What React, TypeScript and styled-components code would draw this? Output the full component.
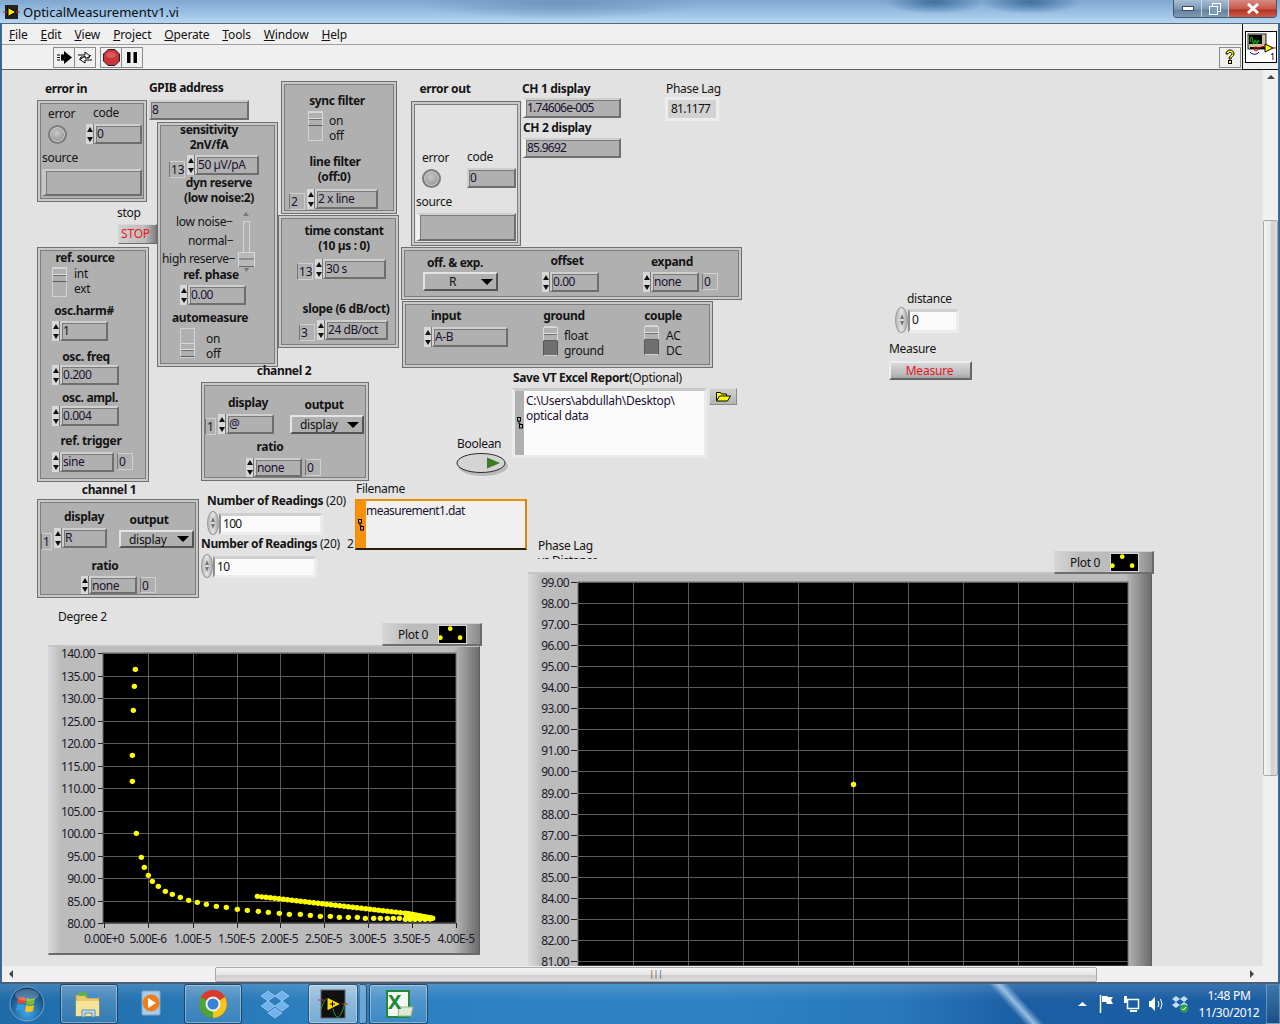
import React from "react";
import styled, { createGlobalStyle, css } from "styled-components";

const Global = createGlobalStyle`
  html, body { margin: 0; padding: 0; background: #1f6aae; overflow: hidden; }
  #root { width: 1280px; height: 1024px; }
  * { box-sizing: border-box; }
`;

const FONT = `"Noto Sans", "Open Sans", Arial, sans-serif`;

type Box = { $x: number; $y: number; $w?: number; $h?: number };
/* Front panel controls sit on a free canvas, as in LabVIEW; props are given in page pixels. */
const at = css<Box>`
  position: absolute;
  left: ${(p) => p.$x - 2}px;
  top: ${(p) => p.$y - 70}px;
  ${(p) => (p.$w !== undefined ? `width: ${p.$w}px;` : "")}
  ${(p) => (p.$h !== undefined ? `height: ${p.$h}px;` : "")}
`;

const Shell = styled.div`
  width: 1280px;
  height: 1024px;
  display: flex;
  flex-direction: column;
  font-family: ${FONT};
  font-size: 12px;
  color: #111;
  overflow: hidden;
`;

const TitleBar = styled.header`
  height: 23px;
  display: flex;
  align-items: center;
  padding-left: 3px;
  gap: 3px;
  position: relative;
  background:
    radial-gradient(ellipse 50px 12px at 935px 2px, #3f6f9f 0%, transparent 100%),
    radial-gradient(ellipse 50px 12px at 1030px 2px, #3f6f9f 0%, transparent 100%),
    radial-gradient(ellipse 140px 16px at 560px 3px, #6f97bd 0%, transparent 100%),
    linear-gradient(to bottom, #7fa7cf, #9cc3e6 60%, #b8d6ee);
`;
const TitleText = styled.span`
  font-size: 13px;
  color: #0c0c0c;
  letter-spacing: 0;
`;
const Caption = styled.div`
  position: absolute;
  right: 3px;
  top: 0;
  display: flex;
  height: 18px;
  border: 1px solid #45566b;
  border-top: none;
  border-radius: 0 0 4px 4px;
  overflow: hidden;
`;
const CaptionBtn = styled.div<{ $w: number; $close?: boolean }>`
  width: ${(p) => p.$w}px;
  display: flex;
  align-items: center;
  justify-content: center;
  border-right: 1px solid #c8d6e4;
  background: ${(p) =>
    p.$close
      ? "linear-gradient(to bottom,#d88a80,#c75a4c 50%,#b53222 60%,#c9604c)"
      : "linear-gradient(to bottom,#a8bed4,#7f9ab6 50%,#64829f 60%,#7d9ab5)"};
  &:last-child { border-right: none; }
`;

const WindowBody = styled.div`
  flex: 0 0 961px;
  display: flex;
  flex-direction: column;
  margin: 0 1px 0 1px;
  border-left: 1px solid #56697c;
  border-right: 1px solid #56697c;
  border-top: 1px solid #56697c;
  border-bottom: 2px solid #4c5f72;
  background: #f0f0f0;
  position: relative;
`;
const MenuBar = styled.nav`
  height: 21px;
  display: flex;
  align-items: center;
  padding-left: 7px;
  gap: 13px;
  border-bottom: 1px solid #a0a0a0;
  font-size: 12px;
  letter-spacing: -0.15px;
`;
const MenuItem = styled.span`
  color: #111;
  u { text-decoration: underline; }
`;
const Toolbar = styled.div`
  height: 25px;
  display: flex;
  align-items: center;
  padding-left: 51px;
  padding-right: 37px;
  border-bottom: 1px solid #5f5f5f;
`;
const ToolGroup = styled.div`
  display: flex;
  margin-right: 5px;
`;
const ToolBtn = styled.div`
  width: 22px;
  height: 21px;
  margin-right: -1px;
  border: 1px solid #8a8a8a;
  display: flex;
  align-items: center;
  justify-content: center;
  background: #f0f0f0;
`;
const HelpBtn = styled(ToolBtn)`
  margin-left: auto;
  margin-right: 0;
`;
const ViIcon = styled.div`
  position: absolute;
  right: 0;
  top: 0;
  width: 36px;
  height: 46px;
  border-left: 1px solid #111;
  border-bottom: 1px solid #111;
  background: #f0f0f0;
  display: flex;
  align-items: center;
  justify-content: center;
`;
const Middle = styled.div`
  flex: 1;
  display: flex;
  min-height: 0;
`;
const Canvas = styled.main`
  position: relative;
  flex: 1;
  background: #e2e2e2;
  overflow: hidden;
`;
const VScroll = styled.div`
  width: 16px;
  background: #f0f0f0;
  border-left: 1px solid #e6e6e6;
  display: flex;
  flex-direction: column;
  align-items: center;
  padding-top: 5px;
`;
const VThumb = styled.div`
  width: 15px;
  height: 556px;
  margin-top: 141px;
  border: 1px solid #a9a9a9;
  border-radius: 2px;
  background: linear-gradient(to right, #f6f6f6, #e6e6e6 50%, #cfcfcf 55%, #dcdcdc);
`;
const ScrollArrow = styled.div<{ $dir: "up" | "left" | "right" }>`
  width: 0;
  height: 0;
  border-style: solid;
  ${(p) =>
    p.$dir === "up"
      ? "border-width:0 4px 4px 4px;border-color:transparent transparent #444 transparent;"
      : p.$dir === "left"
      ? "border-width:4px 4px 4px 0;border-color:transparent #444 transparent transparent;"
      : "border-width:4px 0 4px 4px;border-color:transparent transparent transparent #444;"}
`;
const HScroll = styled.div`
  height: 16px;
  background: #f0f0f0;
  display: flex;
  align-items: center;
  padding-left: 7px;
`;
const HThumb = styled.div`
  width: 882px;
  height: 15px;
  margin-left: 202px;
  border: 1px solid #a9a9a9;
  border-radius: 2px;
  font-size: 8px;
  line-height: 12px;
  text-align: center;
  color: #444;
  background: linear-gradient(to bottom, #f6f6f6, #e6e6e6 50%, #cfcfcf 55%, #dcdcdc);
`;
const HEndArrow = styled.div`
  margin-left: 153px;
`;

/* ---------- front panel parts ---------- */
const Cluster = styled.section<Box>`
  ${at}
  background: #b0b0b0;
  border: 1px solid #6f6f6f;
  box-shadow: inset 0 0 0 2px #c9c9c9, inset 0 0 0 3px #7d7d7d;
`;
const PlainCluster = styled(Cluster)`
  background: #e2e2e2;
`;
const Lbl = styled.span<{ $x?: number; $c?: number; $y: number; $b?: boolean }>`
  position: absolute;
  top: ${(p) => p.$y - 70 - 8}px;
  height: 16px;
  line-height: 16px;
  white-space: nowrap;
  font-size: 12px;
  letter-spacing: ${(p) => (p.$b ? "-0.35px" : "-0.3px")};
  color: #141414;
  font-weight: ${(p) => (p.$b ? 700 : 400)};
  ${(p) => (p.$c !== undefined ? `left:${p.$c - 2}px;transform:translateX(-50%);` : `left:${(p.$x ?? 0) - 2}px;`)}
`;
const Plain = styled.span`
  font-weight: 400;
  letter-spacing: -0.3px;
`;
const NumericRow = styled.div<Box>`
  ${at}
  display: flex;
  align-items: stretch;
`;
const Readout = styled.div`
  flex: 1;
  background: #b0b0b0;
  border: 2px solid;
  border-color: #cfcfcf #6e6e6e #6e6e6e #cfcfcf;
  box-shadow: inset 1px 1px 0 #7a7a7a;
  font-size: 12px;
  letter-spacing: -0.45px;
  line-height: 15px;
  padding-left: 1px;
  white-space: nowrap;
  color: #1a1030;
`;
const PlacedReadout = styled(Readout)<Box>`
  ${at}
`;
const StripReadout = styled(PlacedReadout)`
  border-left: 4px solid #efefef;
  letter-spacing: -0.75px;
`;
const SourceReadout = styled(PlacedReadout)`
  border-left: 4px solid #c6c6c6;
`;
const IndexBox = styled.div<Box>`
  ${at}
  border: 1px solid #d0d0d0;
  border-left: 1px solid #777;
  font-size: 12px;
  line-height: 15px;
  padding-left: 1px;
  color: #1a1030;
`;
const LightReadout = styled.div<Box>`
  ${at}
  background: #d2d2d2;
  border: 3px solid #ececec;
  line-height: 18px;
  padding-left: 3px;
  letter-spacing: -0.75px;
`;
const SpinBox = styled.div`
  flex: 0 0 8px;
  display: flex;
  flex-direction: column;
  justify-content: space-around;
  align-items: center;
  background: #d8d8d8;
  border-right: 1px solid #777;
`;
const TriUp = styled.i`
  width: 0;
  height: 0;
  border-style: solid;
  border-width: 0 3.5px 5px 3.5px;
  border-color: transparent transparent #111 transparent;
`;
const TriDown = styled.i`
  width: 0;
  height: 0;
  border-style: solid;
  border-width: 5px 3.5px 0 3.5px;
  border-color: #111 transparent transparent transparent;
`;
const Ring = styled.div<Box>`
  ${at}
  background: #b0b0b0;
  border: 2px solid;
  border-color: #e4e4e4 #555 #555 #e4e4e4;
  display: flex;
  align-items: center;
  justify-content: space-between;
  padding: 0 3px 0 8px;
  letter-spacing: -0.3px;
`;
const RingArrow = styled.i`
  width: 0;
  height: 0;
  border-style: solid;
  border-width: 6px 6.5px 0 6.5px;
  border-color: #000 transparent transparent transparent;
`;
const RingValue = styled.span`
  margin-left: 16px;
`;
const SwitchTrack = styled.div<Box & { $dark?: boolean; $low?: boolean }>`
  ${at}
  background: ${(p) => (p.$dark ? "linear-gradient(to bottom,#b0b0b0 45%,#6f6f6f 45%)" : "#b0b0b0")};
  border: 1px solid #d2d2d2;
  border-left-color: ${(p) => (p.$dark ? "#555" : "#d2d2d2")};
  border-right-color: ${(p) => (p.$dark ? "#555" : "#d2d2d2")};
  display: flex;
  flex-direction: column;
  justify-content: ${(p) => (p.$low ? "flex-end" : "flex-start")};
`;
const SwitchThumb = styled.div`
  height: 14px;
  background: linear-gradient(to bottom, #b0b0b0 42%, #dedede 42%, #dedede 50%, #707070 50%, #707070 58%, #b0b0b0 58%);
  border: 1px solid #d8d8d8;
  border-bottom: 1px solid #5c5c5c;
  margin: 0 -1px;
`;
const Led = styled.div<Box>`
  ${at}
  border-radius: 50%;
  border: 2px solid #7c7c7c;
  box-shadow: inset 0 0 0 1px #cfcfcf;
  background: radial-gradient(circle at 45% 40%, #c8c8c8 0%, #a0a0a0 60%, #888 100%);
`;
const StopBtn = styled.div<Box>`
  ${at}
  background: linear-gradient(to right, #cfcfcf, #bdbdbd 70%, #7f7f7f);
  border: 1px solid #6c6c6c;
  border-top-color: #d8d8d8;
  border-left-color: #d8d8d8;
  color: #f0141e;
  line-height: 18px;
  text-align: center;
  font-size: 12px;
  letter-spacing: -0.2px;
  padding-right: 4px;
`;
const MeasureBtn = styled(StopBtn)`
  background: linear-gradient(to bottom, #d8d8d8, #bcbcbc 70%, #a4a4a4);
  border: 2px solid;
  border-color: #ededed #666 #666 #ededed;
  line-height: 15px;
  color: #e31422;
  padding-right: 2px;
`;
const WhiteRow = styled.div<Box>`
  ${at}
  display: flex;
  align-items: center;
`;
const WhiteReadout = styled.div<{ $inH: number }>`
  flex: 1;
  height: ${(p) => p.$inH}px;
  margin-top: 1px;
  background: #fafafa;
  border: 3px solid #ececec;
  border-left: 2px solid #8d8d8d;
  border-top: 3px solid #d0d0d0;
  padding-left: 2px;
  line-height: 16px;
  letter-spacing: -0.7px;
`;
const OvalSpin = styled.div<{ $ow: number }>`
  flex: 0 0 ${(p) => p.$ow}px;
  height: 100%;
  border-radius: 50%;
  border: 1px solid #9a9a9a;
  background: linear-gradient(to right, #b7b7b7, #e4e4e4 50%, #a8a8a8);
  display: flex;
  flex-direction: column;
  align-items: center;
  justify-content: center;
  gap: 2px;
`;
const HollowUp = styled.i`
  width: 0;
  height: 0;
  border-style: solid;
  border-width: 0 2.5px 5px 2.5px;
  border-color: transparent transparent #777 transparent;
`;
const HollowDown = styled.i`
  width: 0;
  height: 0;
  border-style: solid;
  border-width: 5px 2.5px 0 2.5px;
  border-color: #777 transparent transparent transparent;
`;
const PathBox = styled.div<Box & { $orange?: boolean }>`
  ${at}
  display: flex;
  background: ${(p) => (p.$orange ? "#f0f0f0" : "#fbfbfb")};
  border: ${(p) => (p.$orange ? "1px solid #e08a10" : "3px solid #ebebeb")};
  border-top: ${(p) => (p.$orange ? "2px solid #ee8c00" : "3px solid #c8c8c8")};
  border-bottom: ${(p) => (p.$orange ? "2px solid #2e1e06" : "3px solid #ebebeb")};
  ${(p) => (p.$orange ? "border-right: 2px solid #d98208;" : "")}
`;
const PathStrip = styled.div<{ $orange?: boolean }>`
  flex: 0 0 ${(p) => (p.$orange ? 10 : 9)}px;
  background: ${(p) => (p.$orange ? "#f7930a" : "#b0b0b0")};
  display: flex;
  align-items: center;
  justify-content: center;
`;
const PathText = styled.div<{ $tight?: boolean }>`
  padding: 2px 0 0 ${(p) => (p.$tight ? 0 : 2)}px;
  line-height: 15px;
  letter-spacing: ${(p) => (p.$tight ? "-0.55px" : "-0.3px")};
  color: #1a1030;
`;
const BrowseBtn = styled.div<Box>`
  ${at}
  background: linear-gradient(to bottom, #d0d0d0, #b4b4b4);
  border: 1px solid #8b8b8b;
  border-top-color: #dedede;
  border-left-color: #dedede;
  display: flex;
  align-items: center;
  justify-content: center;
`;
const ClipLabel = styled.div<Box>`
  ${at}
  overflow: hidden;
  line-height: 15px;
  font-size: 12px;
  letter-spacing: -0.3px;
  white-space: nowrap;
`;
const ChartFrame = styled.div<Box>`
  ${at}
  background: linear-gradient(to right, #d8d8d8 0, #bcbcbc 12px, #bcbcbc calc(100% - 26px), #6f6f6f calc(100% - 1px));
  border-top: 2px solid #c4c4c4;
  border-left: 1px solid #d8d8d8;
  border-bottom: 2px solid #6a6a6a;
  border-right: 1px solid #5f5f5f;
`;
const Legend = styled.div<Box>`
  ${at}
  background: linear-gradient(to right, #d6d6d6, #bcbcbc 25px, #bcbcbc 78%, #8a8a8a);
  border-top: 1px solid #d0d0d0;
  border-left: 1px solid #d8d8d8;
  border-right: 2px solid #6a6a6a;
  border-bottom: 2px solid #6f6f6f;
  display: flex;
  align-items: center;
  padding-left: 15px;
  gap: 10px;
  letter-spacing: -0.3px;
`;
const LegendSwatch = styled.svg`
  width: 29px;
  height: 19px;
  background: #000;
  border: 1px solid #d8d8d8;
  display: block;
`;
const PlotSvg = styled.svg<Box>`
  ${at}
  font-family: ${FONT};
  font-size: 12px;
  letter-spacing: -0.6px;
`;

/* ---------- taskbar ---------- */
const Taskbar = styled.footer`
  flex: 0 0 40px;
  position: relative;
  display: flex;
  align-items: stretch;
  overflow: hidden;
  background:
    linear-gradient(to bottom, rgba(255,255,255,0.14), rgba(255,255,255,0) 40%),
    linear-gradient(to right, #1f6ba8 0, #2d7fbf 25%, #2f83c5 55%, #2878ba 70%, #1b5ea3 80%, #1a5da2 100%);
  &::after {
    content: "";
    position: absolute;
    left: 1010px;
    top: -6px;
    width: 20px;
    height: 60px;
    background: linear-gradient(to right, rgba(190,220,245,0), rgba(190,220,245,0.75) 50%, rgba(190,220,245,0));
    transform: skewX(42deg);
  }
`;
const Orb = styled.div`
  flex: 0 0 60px;
  display: flex;
  align-items: center;
  justify-content: center;
  padding-right: 6px;
`;
const TaskItem = styled.div<{ $w: number; $framed?: boolean; $active?: boolean; $gap?: number }>`
  flex: 0 0 ${(p) => p.$w}px;
  margin-right: ${(p) => p.$gap ?? 4}px;
  display: flex;
  align-items: center;
  justify-content: center;
  ${(p) =>
    p.$framed
      ? `border:1px solid rgba(10,40,70,.7);border-radius:3px;box-shadow:inset 0 0 0 1px rgba(255,255,255,.35);
         background:linear-gradient(to bottom,rgba(255,255,255,${p.$active ? 0.55 : 0.22}),rgba(255,255,255,${p.$active ? 0.35 : 0.08}));`
      : ""}
`;
const StackEdge = styled.div`
  flex: 0 0 7px;
  margin-left: 2px;
  margin-right: 2px;
  border: 1px solid rgba(10,40,70,.7);
  border-left: none;
  border-radius: 0 3px 3px 0;
  background: rgba(255,255,255,.3);
`;
const Tray = styled.div`
  margin-left: auto;
  display: flex;
  align-items: center;
  position: relative;
  z-index: 1;
`;
const TrayIcons = styled.div`
  display: flex;
  align-items: center;
  gap: 8px;
  margin-right: 3px;
  & > svg:first-child { margin-right: 4px; }
`;
const Clock = styled.div`
  width: 74px;
  text-align: center;
  color: #fff;
  font-size: 12px;
  line-height: 17px;
  letter-spacing: -0.3px;
`;
const ShowDesktop = styled.div`
  width: 14px;
  height: 40px;
  border: 1px solid rgba(255,255,255,.3);
  background: linear-gradient(to bottom, #3b78ab, #1a4f86);
`;

/* ---------- compound controls ---------- */
const Numeric = ({ x, y, w, h = 20, v }: { x: number; y: number; w: number; h?: number; v: string }) => (
  <NumericRow $x={x} $y={y} $w={w} $h={h}>
    <SpinBox>
      <TriUp />
      <TriDown />
    </SpinBox>
    <Readout>{v}</Readout>
  </NumericRow>
);
const Idx = ({ x, y, w = 16, h = 17, v }: { x: number; y: number; w?: number; h?: number; v: string }) => (
  <IndexBox $x={x} $y={y} $w={w} $h={h}>{v}</IndexBox>
);
const Switch = ({ x, y, w = 15, low, dark }: { x: number; y: number; w?: number; low?: boolean; dark?: boolean }) => (
  <SwitchTrack $x={x} $y={y} $w={w} $h={30} $low={low} $dark={dark}>
    <SwitchThumb />
  </SwitchTrack>
);
const OvalNumeric = ({ x, y, w, h, ow, v }: { x: number; y: number; w: number; h: number; ow: number; v: string }) => (
  <WhiteRow $x={x} $y={y} $w={w} $h={h}>
    <OvalSpin $ow={ow}>
      <HollowUp />
      <HollowDown />
    </OvalSpin>
    <WhiteReadout $inH={h - 2}>{v}</WhiteReadout>
  </WhiteRow>
);
const LinkGlyph = () => (
  <svg width="6" height="12" viewBox="0 0 6 12">
    <rect x="0.5" y="0.5" width="3" height="3.5" fill="none" stroke="#000" />
    <rect x="2.5" y="7.5" width="3" height="3.5" fill="none" stroke="#000" />
    <path d="M2 4v3h2" fill="none" stroke="#000" />
  </svg>
);
const LegendIcon = () => (
  <LegendSwatch viewBox="0 0 29 19">
    <circle cx="12" cy="3" r="2.6" fill="#ff0" />
    <circle cx="1" cy="13" r="2.6" fill="#ff0" />
    <circle cx="23" cy="13" r="2.6" fill="#ff0" />
  </LegendSwatch>
);

/* ---------- charts ---------- */
const DOTS1: [number, number][] = [
  [286,148],[283,199],[280,271],[277,406],[277,484],[289,640],[304,712],[313,742],[325,766],[337,784],[355,799],[376,814],[397,823],[421,832],[446,841],[472,847],[499,853],[529,859],[559,862],[592,868],[622,871],[655,874],[685,877],[718,880],[748,883],[781,883],[811,886],[841,889],[871,889],[898,892],[925,892],[952,892],[976,895],[1001,895],[1021,895],[1042,895],[1060,895],[1078,895],[1096,898],[1110,898],[1125,898],[1140,898],[1155,898],[1170,897],
];
const upperDots = (): [number, number][] => {
  const out: [number, number][] = [];
  for (let x = 652; x <= 1100; x += 13) out.push([x, 829 + ((x - 652) * 51) / 448]);
  for (let x = 1100; x <= 1180; x += 6) out.push([x, 880 + ((x - 1100) * 15) / 80]);
  for (let x = 1100; x <= 1172; x += 7) out.push([x, 890 + ((x - 1100) * 5) / 80]);
  return out;
};

const Chart1 = () => {
  const L = 103, T = 653, R = 456, B = 923;
  const ys = ["140.00","135.00","130.00","125.00","120.00","115.00","110.00","105.00","100.00","95.00","90.00","85.00","80.00"];
  const xs = ["0.00E+0","5.00E-6","1.00E-5","1.50E-5","2.00E-5","2.50E-5","3.00E-5","3.50E-5","4.00E-5"];
  const gx = [104, 148, 192.5, 236.5, 279.5, 323.5, 367.5, 411.5, 456];
  const yAt = (i: number) => Math.round(T + (i * (B - T)) / 12) + 0.5;
  const all = [...DOTS1, ...upperDots()];
  return (
    <PlotSvg $x={48} $y={645} $w={432} $h={310} viewBox="48 645 432 310">
      <rect x={L} y={T} width={R - L} height={B - T} fill="#000" stroke="#6a6a6a" />
      {ys.map((t, i) => (
        <g key={t}>
          <line x1={L} x2={R} y1={yAt(i)} y2={yAt(i)} stroke="#5c5c5c" />
          <line x1={98} x2={103} y1={yAt(i)} y2={yAt(i)} stroke="#222" />
          <text x={95} y={yAt(i) + 4.5} textAnchor="end" fill="#1a1a2a">{t}</text>
        </g>
      ))}
      {xs.map((t, i) => (
        <g key={t}>
          {i > 0 && i < 8 && <line x1={Math.round(gx[i]) + 0.5} x2={Math.round(gx[i]) + 0.5} y1={T} y2={B} stroke="#5c5c5c" />}
          <line x1={Math.round(gx[i]) + 0.5} x2={Math.round(gx[i]) + 0.5} y1={B} y2={B + 5} stroke="#222" />
          <text x={gx[i]} y={943} textAnchor="middle" fill="#1a1a2a">{t}</text>
        </g>
      ))}
      {all.map(([x, y], i) => (
        <circle key={i} cx={x / 3 + 40} cy={y / 3 + 620} r={2.7} fill="#ff0" />
      ))}
    </PlotSvg>
  );
};

const Chart2 = () => {
  const L = 578, T = 582, R = 1128, B = 966;
  const labels = Array.from({ length: 19 }, (_, i) => `${99 - i}.00`);
  const yAt = (i: number) => Math.round(T + i * 21.05) + 0.5;
  const gx = [633, 688, 743, 798, 853, 908, 963, 1018, 1073];
  return (
    <PlotSvg $x={528} $y={572} $w={624} $h={394} viewBox="528 572 624 394">
      <rect x={L} y={T} width={R - L} height={B - T} fill="#000" stroke="#6a6a6a" />
      {labels.map((t, i) => (
        <g key={t}>
          <line x1={L} x2={R} y1={yAt(i)} y2={yAt(i)} stroke="#5c5c5c" />
          <line x1={571} x2={577} y1={yAt(i)} y2={yAt(i)} stroke="#222" />
          <text x={569} y={yAt(i) + 4} textAnchor="end" fill="#1a1a2a">{t}</text>
        </g>
      ))}
      {gx.map((x) => (
        <line key={x} x1={x + 0.5} x2={x + 0.5} y1={T} y2={B} stroke="#5c5c5c" />
      ))}
      <circle cx={853.5} cy={784.5} r={2.7} fill="#ff0" />
    </PlotSvg>
  );
};

const FrontPanel = () => (
  <Canvas>
    {/* error in */}
    <Lbl $x={45} $y={89} $b>error in</Lbl>
    <Cluster $x={37} $y={100} $w={110} $h={102} />
    <Lbl $x={48} $y={114}>error</Lbl>
    <Lbl $x={93} $y={113}>code</Lbl>
    <Led $x={48} $y={125} $w={19} $h={19} />
    <Numeric x={86} y={124} w={56} v="0" />
    <Lbl $x={42} $y={158}>source</Lbl>
    <SourceReadout $x={42} $y={169} $w={100} $h={27} />

    {/* GPIB */}
    <Lbl $x={149} $y={88} $b>GPIB address</Lbl>
    <PlacedReadout $x={149} $y={100} $w={100} $h={20}>8</PlacedReadout>

    {/* sync / line filter */}
    <Cluster $x={281} $y={81} $w={116} $h={133} />
    <Lbl $c={337} $y={101} $b>sync filter</Lbl>
    <Switch x={308} y={111} />
    <Lbl $x={329} $y={121}>on</Lbl>
    <Lbl $x={329} $y={136}>off</Lbl>
    <Lbl $c={335} $y={162} $b>line filter</Lbl>
    <Lbl $c={334} $y={177} $b>(off:0)</Lbl>
    <Idx x={289} y={193} v="2" />
    <Numeric x={307} y={189} w={71} v="2 x line" />

    {/* sensitivity */}
    <Cluster $x={157} $y={122} $w={121} $h={245} />
    <Lbl $c={209} $y={130} $b>sensitivity</Lbl>
    <Lbl $c={209} $y={145} $b>2nV/fA</Lbl>
    <Idx x={169} y={161} v="13" />
    <Numeric x={187} y={155} w={72} v="50 µV/pA" />
    <Lbl $c={219} $y={183} $b>dyn reserve</Lbl>
    <Lbl $c={219} $y={198} $b>(low noise:2)</Lbl>
    <Lbl $x={176} $y={222}>low noise−</Lbl>
    <Lbl $x={188} $y={241}>normal−</Lbl>
    <Lbl $x={162} $y={259}>high reserve−</Lbl>
    <PlotSvg $x={236} $y={208} $w={22} $h={66} viewBox="236 208 22 66">
      <path d="M243 216l3-4 3 4z" fill="#777" />
      <rect x="243.5" y="221.5" width="6" height="32" fill="#b0b0b0" stroke="#d4d4d4" />
      <rect x="238.5" y="252.5" width="16" height="14" fill="#b8b8b8" stroke="#d8d8d8" />
      <line x1="239" x2="254" y1="259" y2="259" stroke="#6a6a6a" />
      <line x1="239" x2="254" y1="266.5" y2="266.5" stroke="#6a6a6a" />
      <path d="M244 268l2.5 4 2.5-4z" fill="#777" />
    </PlotSvg>
    <Lbl $c={211} $y={275} $b>ref. phase</Lbl>
    <Numeric x={180} y={285} w={66} v="0.00" />
    <Lbl $c={210} $y={318} $b>automeasure</Lbl>
    <Switch x={180} y={328} low />
    <Lbl $x={206} $y={339}>on</Lbl>
    <Lbl $x={206} $y={354}>off</Lbl>

    {/* time constant */}
    <Cluster $x={278} $y={215} $w={121} $h={133} />
    <Lbl $c={344} $y={231} $b>time constant</Lbl>
    <Lbl $c={344} $y={246} $b>(10 µs : 0)</Lbl>
    <Idx x={297} y={263} v="13" />
    <Numeric x={315} y={259} w={71} v="30 s" />
    <Lbl $c={346} $y={309} $b>slope (6 dB/oct)</Lbl>
    <Idx x={299} y={324} v="3" />
    <Numeric x={317} y={320} w={71} v="24 dB/oct" />

    {/* stop */}
    <Lbl $x={117} $y={213}>stop</Lbl>
    <StopBtn $x={118} $y={224} $w={39} $h={20}>STOP</StopBtn>

    {/* ref source */}
    <Cluster $x={37} $y={247} $w={112} $h={235} />
    <Lbl $c={85} $y={258} $b>ref. source</Lbl>
    <Switch x={52} y={267} />
    <Lbl $x={74} $y={274}>int</Lbl>
    <Lbl $x={74} $y={289}>ext</Lbl>
    <Lbl $c={84} $y={311} $b>osc.harm#</Lbl>
    <Numeric x={52} y={321} w={56} v="1" />
    <Lbl $c={86} $y={357} $b>osc. freq</Lbl>
    <Numeric x={52} y={365} w={67} v="0.200" />
    <Lbl $c={90} $y={398} $b>osc. ampl.</Lbl>
    <Numeric x={52} y={406} w={67} v="0.004" />
    <Lbl $c={91} $y={441} $b>ref. trigger</Lbl>
    <Numeric x={52} y={452} w={62} v="sine" />
    <Idx x={117} y={453} v="0" />

    {/* channel 2 */}
    <Lbl $c={284} $y={371} $b>channel 2</Lbl>
    <Cluster $x={201} $y={382} $w={168} $h={99} />
    <Lbl $c={248} $y={403} $b>display</Lbl>
    <Lbl $c={324} $y={405} $b>output</Lbl>
    <Idx x={205} y={418} w={11} v="1" />
    <Numeric x={218} y={414} w={56} v="@" />
    <Ring $x={290} $y={415} $w={74} $h={19}>display<RingArrow /></Ring>
    <Lbl $c={270} $y={447} $b>ratio</Lbl>
    <Numeric x={246} y={458} w={56} h={19} v="none" />
    <Idx x={305} y={459} v="0" />

    {/* channel 1 */}
    <Lbl $c={109} $y={490} $b>channel 1</Lbl>
    <Cluster $x={37} $y={499} $w={162} $h={99} />
    <Lbl $c={84} $y={517} $b>display</Lbl>
    <Lbl $c={149} $y={520} $b>output</Lbl>
    <Idx x={41} y={533} w={11} v="1" />
    <Numeric x={54} y={528} w={53} v="R" />
    <Ring $x={119} $y={530} $w={75} $h={18}>display<RingArrow /></Ring>
    <Lbl $c={105} $y={566} $b>ratio</Lbl>
    <Numeric x={81} y={576} w={56} h={18} v="none" />
    <Idx x={140} y={577} h={16} v="0" />

    {/* readings */}
    <Lbl $x={207} $y={501} $b>Number of Readings <Plain>(20)</Plain></Lbl>
    <OvalNumeric x={207} y={511} w={116} h={24} ow={12} v="100" />
    <Lbl $x={201} $y={544} $b>Number of Readings <Plain>(20)</Plain></Lbl>
    <OvalNumeric x={201} y={554} w={116} h={24} ow={12} v="10" />
    <Lbl $x={347} $y={544}>2</Lbl>

    {/* filename */}
    <Lbl $x={356} $y={489}>Filename</Lbl>
    <PathBox $x={355} $y={499} $w={172} $h={51} $orange>
      <PathStrip $orange><LinkGlyph /></PathStrip>
      <PathText $tight>measurement1.dat</PathText>
    </PathBox>

    <Lbl $x={58} $y={617}>Degree 2</Lbl>

    {/* error out */}
    <Lbl $c={445} $y={89} $b>error out</Lbl>
    <PlainCluster $x={411} $y={101} $w={110} $h={145} />
    <Lbl $x={422} $y={158}>error</Lbl>
    <Lbl $x={467} $y={157}>code</Lbl>
    <Led $x={422} $y={169} $w={19} $h={19} />
    <PlacedReadout $x={467} $y={168} $w={49} $h={20}>0</PlacedReadout>
    <Lbl $x={416} $y={202}>source</Lbl>
    <StripReadout $x={416} $y={213} $w={100} $h={28} />

    {/* displays */}
    <Lbl $x={522} $y={89} $b>CH 1 display</Lbl>
    <StripReadout $x={522} $y={98} $w={99} $h={20}>1.74606e-005</StripReadout>
    <Lbl $x={523} $y={128} $b>CH 2 display</Lbl>
    <StripReadout $x={522} $y={138} $w={99} $h={20}>85.9692</StripReadout>
    <Lbl $x={666} $y={89}>Phase Lag</Lbl>
    <LightReadout $x={665} $y={97} $w={54} $h={24}>81.1177</LightReadout>

    {/* offset and expand */}
    <Cluster $x={401} $y={247} $w={341} $h={53} />
    <Lbl $c={455} $y={263} $b>off. &amp; exp.</Lbl>
    <Ring $x={423} $y={272} $w={75} $h={19}>
      <RingValue>R</RingValue><RingArrow />
    </Ring>
    <Lbl $c={567} $y={261} $b>offset</Lbl>
    <Numeric x={542} y={272} w={57} v="0.00" />
    <Lbl $c={672} $y={262} $b>expand</Lbl>
    <Numeric x={643} y={272} w={56} v="none" />
    <Idx x={702} y={273} v="0" />

    {/* input */}
    <Cluster $x={402} $y={301} $w={311} $h={67} />
    <Lbl $c={446} $y={316} $b>input</Lbl>
    <Numeric x={424} y={327} w={84} v="A-B" />
    <Lbl $c={564} $y={316} $b>ground</Lbl>
    <Switch x={543} y={326} dark />
    <Lbl $x={564} $y={336}>float</Lbl>
    <Lbl $x={564} $y={351}>ground</Lbl>
    <Lbl $c={663} $y={316} $b>couple</Lbl>
    <Switch x={644} y={325} dark />
    <Lbl $x={666} $y={336}>AC</Lbl>
    <Lbl $x={666} $y={351}>DC</Lbl>

    {/* report path */}
    <Lbl $x={513} $y={378} $b>Save VT Excel Report<Plain>(Optional)</Plain></Lbl>
    <PathBox $x={512} $y={388} $w={195} $h={70}>
      <PathStrip><LinkGlyph /></PathStrip>
      <PathText>C:\Users\abdullah\Desktop\<br />optical data</PathText>
    </PathBox>
    <BrowseBtn $x={709} $y={388} $w={28} $h={17}>
      <svg width="16" height="11" viewBox="0 0 16 11">
        <path d="M1.5 10V1.5h4l1 1.5h5V5" fill="#ff0" stroke="#000" />
        <path d="M1.5 10l3-5h11l-3 5z" fill="#ff0" stroke="#000" />
      </svg>
    </BrowseBtn>

    {/* boolean */}
    <Lbl $x={457} $y={444}>Boolean</Lbl>
    <PlotSvg $x={454} $y={450} $w={56} $h={28} viewBox="454 450 56 28">
      <ellipse cx="483" cy="466" rx="25" ry="10" fill="#a9a9a9" opacity=".7" />
      <ellipse cx="481" cy="463" rx="24" ry="9.5" fill="#d4d4d4" stroke="#2c2c2c" />
      <path d="M487 457.5l13 5.5-13 5.5z" fill="#3c7a24" />
    </PlotSvg>

    {/* distance */}
    <Lbl $x={907} $y={299}>distance</Lbl>
    <OvalNumeric x={895} y={307} w={64} h={26} ow={13} v="0" />
    <Lbl $x={889} $y={349}>Measure</Lbl>
    <MeasureBtn $x={889} $y={361} $w={83} $h={19}>Measure</MeasureBtn>

    {/* graphs */}
    <ClipLabel $x={538} $y={538} $w={70} $h={21}>
      Phase Lag<br />vs Distance
    </ClipLabel>
    <ChartFrame $x={528} $y={572} $w={624} $h={420} />
    <Chart2 />
    <Legend $x={1054} $y={551} $w={100} $h={23}>Plot 0<LegendIcon /></Legend>

    <ChartFrame $x={48} $y={645} $w={432} $h={310} />
    <Chart1 />
    <Legend $x={382} $y={623} $w={100} $h={23}>Plot 0<LegendIcon /></Legend>
  </Canvas>
);

const App = () => (
  <Shell>
    <Global />
    <TitleBar>
      <svg width="17" height="16" viewBox="0 0 17 16">
        <rect x="2" y="1" width="13" height="14" fill="#222" />
        <path d="M0 8h17" stroke="#c22" />
        <path d="M5 3.5l8 4.5-8 4.5z" fill="#ffe600" stroke="#000" />
      </svg>
      <TitleText>OpticalMeasurementv1.vi</TitleText>
      <Caption>
        <CaptionBtn $w={28}>
          <svg width="12" height="6" viewBox="0 0 12 6"><rect x=".5" y=".5" width="11" height="4" fill="#fff" stroke="#3c4c60" /></svg>
        </CaptionBtn>
        <CaptionBtn $w={27}>
          <svg width="12" height="12" viewBox="0 0 12 12">
            <rect x="3.5" y=".5" width="8" height="8" fill="none" stroke="#fff" />
            <rect x=".5" y="3.5" width="8" height="8" fill="#7f9ab6" stroke="#fff" />
          </svg>
        </CaptionBtn>
        <CaptionBtn $w={47} $close>
          <svg width="12" height="11" viewBox="0 0 12 11"><path d="M1 1l10 9M11 1L1 10" stroke="#fff" strokeWidth="3" /></svg>
        </CaptionBtn>
      </Caption>
    </TitleBar>

    <WindowBody>
      <MenuBar>
        <MenuItem><u>F</u>ile</MenuItem>
        <MenuItem><u>E</u>dit</MenuItem>
        <MenuItem><u>V</u>iew</MenuItem>
        <MenuItem><u>P</u>roject</MenuItem>
        <MenuItem><u>O</u>perate</MenuItem>
        <MenuItem><u>T</u>ools</MenuItem>
        <MenuItem><u>W</u>indow</MenuItem>
        <MenuItem><u>H</u>elp</MenuItem>
      </MenuBar>
      <Toolbar>
        <ToolGroup>
          <ToolBtn>
            <svg width="16" height="13" viewBox="0 0 16 13">
              <path d="M6 4h1M6 6.5h1M6 9h1M1 4h3M1 6.5h3M1 9h3" stroke="#000" />
              <path d="M8 0l8 6.5L8 13V9.5H5v-6h3z" fill="#000" />
            </svg>
          </ToolBtn>
          <ToolBtn>
            <svg width="18" height="15" viewBox="0 0 18 15">
              <path d="M2 5h7V2l5 4-5 3.5V7H5l-1.5 3" fill="#fff" stroke="#000" />
              <path d="M16 10H9v3L4 9.5 9 6v2h4l1.5-3" fill="#fff" stroke="#000" />
            </svg>
          </ToolBtn>
        </ToolGroup>
        <ToolGroup>
          <ToolBtn>
            <svg width="17" height="17" viewBox="0 0 17 17">
              <path d="M5 .5h7L16.500 5v7L12 16.500H5L.5 12V5z" fill="#c8343a" stroke="#222" />
              <ellipse cx="8" cy="6" rx="5" ry="3" fill="#e06a6a" opacity=".7" />
            </svg>
          </ToolBtn>
          <ToolBtn>
            <svg width="10" height="11" viewBox="0 0 10 11">
              <rect x="0" y="0" width="3.500" height="11" fill="#000" />
              <rect x="6.500" y="0" width="3.500" height="11" fill="#000" />
            </svg>
          </ToolBtn>
        </ToolGroup>
        <HelpBtn>
          <svg width="12" height="16" viewBox="0 0 12 16">
            <path d="M2 5C2 2.500 4 1 6 1s4 1.500 4 4c0 2.500-3 2.500-3 5H5c0-3.500 3-3.500 3-5 0-1-1-1.500-2-1.500S4 4 4 5z" fill="#ff0" stroke="#000" />
            <rect x="4.500" y="11.500" width="3" height="3" fill="#ff0" stroke="#000" />
          </svg>
        </HelpBtn>
      </Toolbar>
      <ViIcon>
        <svg width="32" height="32" viewBox="0 0 32 32">
          <rect x=".5" y=".5" width="31" height="31" fill="#fff" stroke="#000" />
          <rect x="3" y="3" width="18" height="15" fill="#c8c0a0" stroke="#222" />
          <rect x="4" y="4" width="13" height="9" fill="#000" />
          <path d="M5 11c1-7 2-7 3 0s2-7 3 0 2-7 3 0" fill="none" stroke="#0c0" />
          <path d="M5 17h15" stroke="#000" strokeWidth="2" />
          <path d="M5 21c2 3 7 3 9 0" fill="none" stroke="#00a" />
          <circle cx="11" cy="18" r="2" fill="none" stroke="#d00" />
          <path d="M20 13l8 4-8 4z" fill="#ff0" stroke="#000" />
          <path d="M27 17h4M13 17l7-2" stroke="#c00" />
          <text x="25" y="29" fontSize="9" fontFamily={FONT} fill="#000">1</text>
        </svg>
      </ViIcon>
      <Middle>
        <FrontPanel />
        <VScroll>
          <ScrollArrow $dir="up" />
          <VThumb />
        </VScroll>
      </Middle>
      <HScroll>
        <ScrollArrow $dir="left" />
        <HThumb>|||</HThumb>
        <HEndArrow><ScrollArrow $dir="right" /></HEndArrow>
      </HScroll>
    </WindowBody>

    <Taskbar>
      <Orb>
        <svg width="36" height="36" viewBox="0 0 36 36">
          <defs>
            <radialGradient id="orbG" cx="50%" cy="75%" r="70%">
              <stop offset="0" stopColor="#3fa7e8" />
              <stop offset="1" stopColor="#0e3f70" />
            </radialGradient>
          </defs>
          <circle cx="18" cy="18" r="17" fill="url(#orbG)" stroke="#a8cbe4" strokeOpacity=".6" />
          <path d="M9 12q4-2 8 0l-1 6q-4-2-8 0z" fill="#e8482a" />
          <path d="M18 12q4 2 8 0l-1 6q-4 2-8 0z" fill="#7ebc2a" />
          <path d="M8 19q4-2 8 0l-1 6q-4-2-8 0z" fill="#2f9be0" />
          <path d="M17 19q4 2 8 0l-1 6q-4 2-8 0z" fill="#f6c21c" />
          <ellipse cx="18" cy="9" rx="12" ry="6" fill="#fff" opacity=".22" />
        </svg>
      </Orb>
      <TaskItem $w={58} $framed>
        <svg width="32" height="32" viewBox="0 0 32 32">
          <path d="M3 7h9l2 3h12v18H3z" fill="#e8c96a" stroke="#b8953a" />
          <path d="M3 13h23v15H3z" fill="#f6e39a" />
          <rect x="6" y="4" width="8" height="4" fill="#5db14a" />
          <rect x="16" y="6" width="8" height="4" fill="#3f8fd8" />
          <path d="M9 22h13v7h-3v-4h-7v4H9z" fill="#bfe0f2" stroke="#5f8fb0" />
        </svg>
      </TaskItem>
      <TaskItem $w={58}>
        <svg width="30" height="32" viewBox="0 0 30 32">
          <rect x="6" y="3" width="18" height="24" rx="1" fill="#a9cbe8" stroke="#7fa7c8" />
          <circle cx="15" cy="15" r="8.500" fill="#ef7d1a" />
          <path d="M12 10l8 5-8 5z" fill="#fff" />
        </svg>
      </TaskItem>
      <TaskItem $w={58} $framed>
        <svg width="30" height="30" viewBox="0 0 30 30">
          <circle cx="15" cy="15" r="14" fill="#d93a2b" />
          <path d="M15 15L3 22A14 14 0 0 1 3 8z" fill="#4aa63c" />
          <path d="M15 15L3 22A14 14 0 0 0 28 20z" fill="#4aa63c" />
          <path d="M15 15L15 29A14 14 0 0 0 27 8z" fill="#f5c518" />
          <circle cx="15" cy="15" r="6.500" fill="#3a82d8" stroke="#eee" strokeWidth="2" />
        </svg>
      </TaskItem>
      <TaskItem $w={58}>
        <svg width="32" height="30" viewBox="0 0 32 30">
          <path d="M9 2l7 5-7 5-7-5zM23 2l7 5-7 5-7-5zM9 12l7 5-7 5-7-5zM23 12l7 5-7 5-7-5zM16 19l7 5-7 5-7-5z" fill="#6fb3ee" stroke="#bcdcf5" strokeWidth=".6" />
        </svg>
      </TaskItem>
      <TaskItem $w={50} $framed $active $gap={0}>
        <svg width="30" height="30" viewBox="0 0 30 30">
          <rect x="3" y="1" width="24" height="28" fill="#111" stroke="#666" />
          <path d="M3 20c5-14 8-14 12 0s8 8 12-6" fill="none" stroke="#2c9a4a" />
          <path d="M9 8l14 7-14 7z" fill="#ffdc00" stroke="#000" />
          <path d="M12 15h5M14.500 12.500v5" stroke="#000" />
          <path d="M0 11h6M24 15h6" stroke="#c33" />
        </svg>
      </TaskItem>
      <StackEdge />
      <TaskItem $w={59} $framed $gap={0}>
        <svg width="30" height="30" viewBox="0 0 30 30">
          <rect x="3" y="2" width="22" height="26" fill="#f4f8ee" stroke="#1f8a3a" strokeWidth="2" />
          <path d="M15 18h14l-2 9H14z" fill="#dfe8d4" stroke="#9ab08a" />
          <text x="4" y="20" fontSize="20" fontWeight="700" fontFamily={FONT} fill="#1c8a3a">X</text>
        </svg>
      </TaskItem>
      <Tray>
        <TrayIcons>
          <svg width="9" height="6" viewBox="0 0 9 6"><path d="M0 5l4.500-4L9 5z" fill="#fff" /></svg>
          <svg width="16" height="18" viewBox="0 0 16 18"><path d="M1.500 0v18" stroke="#fff" strokeWidth="1.500" /><path d="M3 1h5l1 1h5l-2 3 2 4H8L7 7H3z" fill="#fff" /></svg>
          <svg width="17" height="18" viewBox="0 0 17 18"><rect x="4.500" y="4.500" width="11" height="9" fill="none" stroke="#fff" strokeWidth="1.500" /><rect x="1" y="1" width="3" height="7" fill="#fff" /><path d="M7 16h7" stroke="#fff" strokeWidth="2" /></svg>
          <svg width="16" height="16" viewBox="0 0 16 16"><path d="M1 5h2l4-4v14l-4-4H1z" fill="#fff" /><path d="M10 5q2 3 0 6M12.500 3q3 5 0 10" stroke="#fff" fill="none" /></svg>
          <svg width="17" height="18" viewBox="0 0 17 18">
            <path d="M4 1l4 3-4 3-4-3zM12 1l4 3-4 3-4-3zM4 7l4 3-4 3-4-3zM12 7l4 3-4 3-4-3z" fill="#bcdff7" />
            <circle cx="12" cy="13.500" r="4" fill="#2fa043" />
            <path d="M10 13.500l1.500 1.500 2.500-3" stroke="#fff" fill="none" />
          </svg>
        </TrayIcons>
        <Clock>1:48 PM<br />11/30/2012</Clock>
        <ShowDesktop />
      </Tray>
    </Taskbar>
  </Shell>
);

export default App;
